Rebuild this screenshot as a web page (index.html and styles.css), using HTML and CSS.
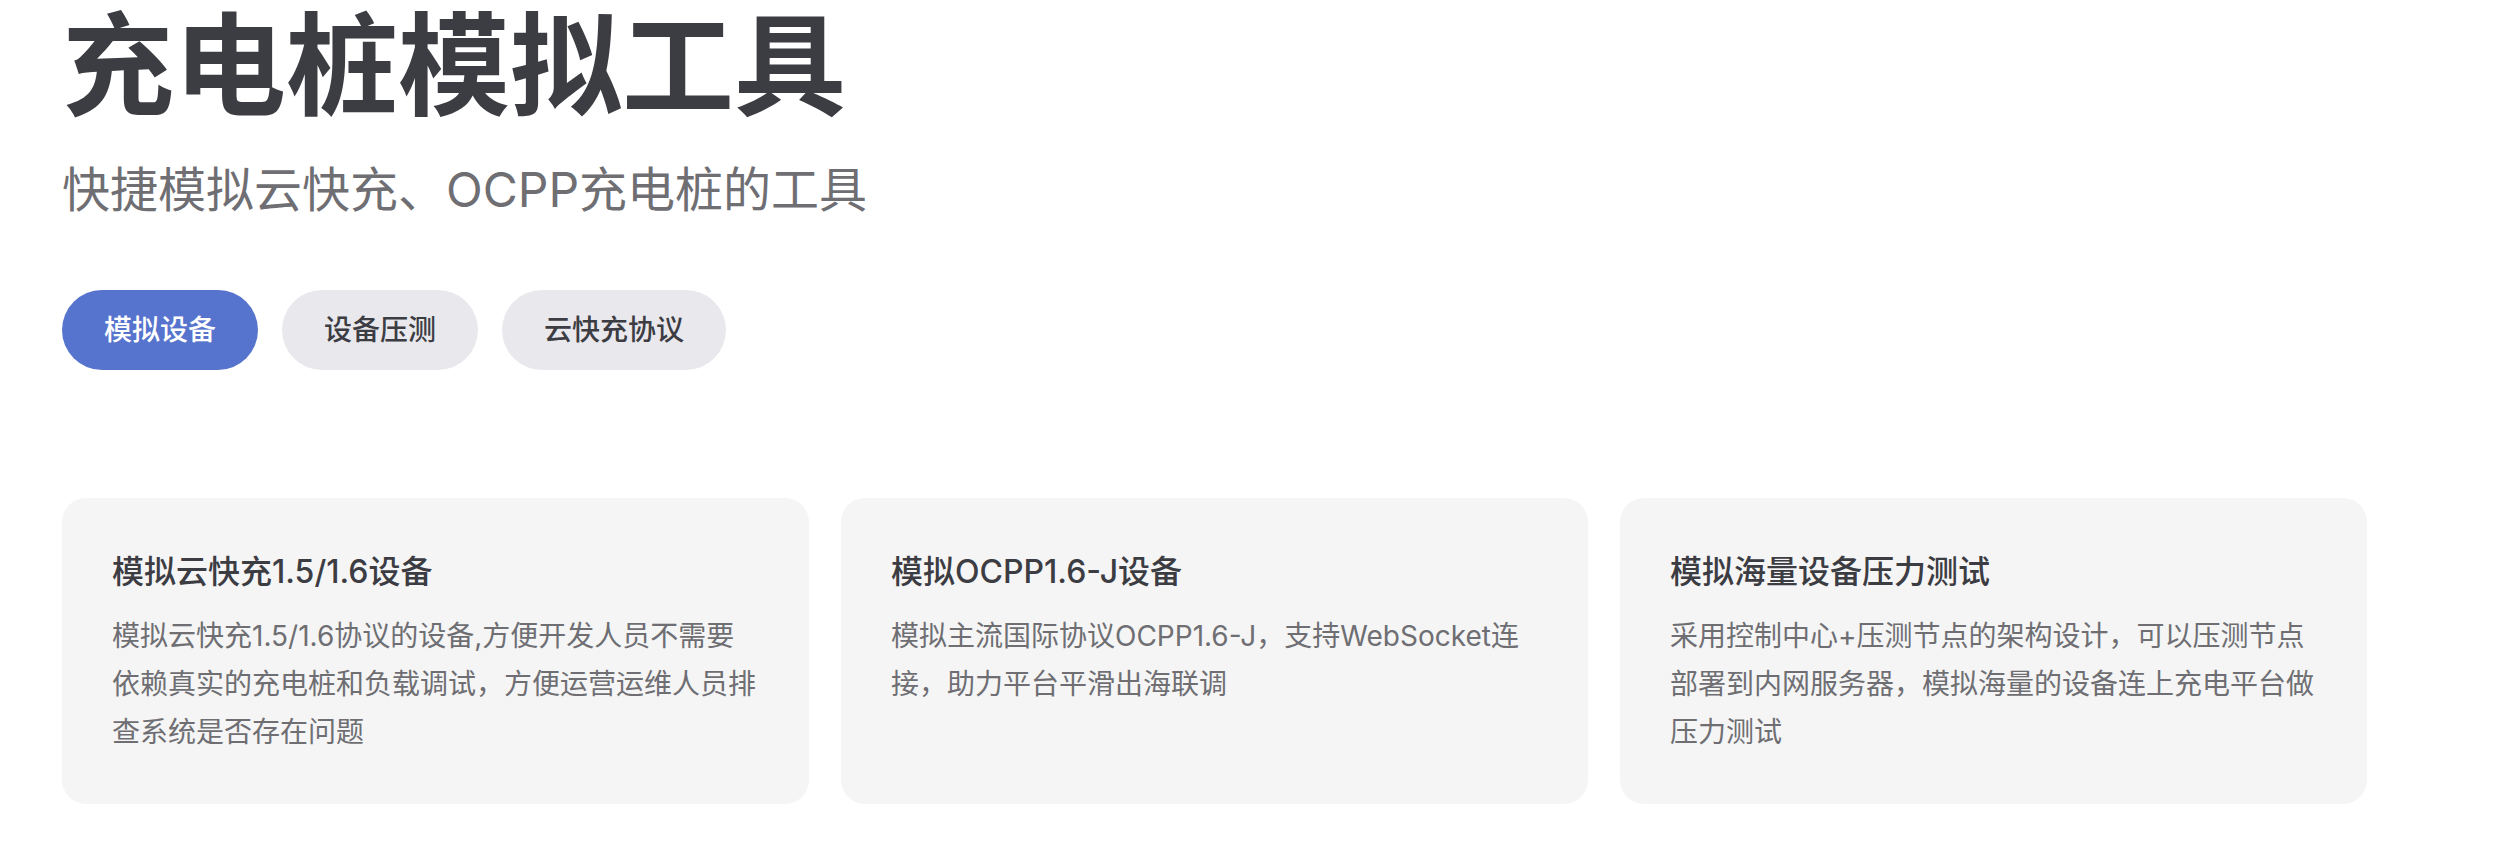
FILE: index.html
```html
<!DOCTYPE html>
<html lang="zh-CN">
<head>
<meta charset="utf-8">
<title>充电桩模拟工具</title>
<link rel="stylesheet" href="styles.css">
</head>
<body>
<main class="page">
  <header class="hero">
    <h1 class="hero-title">充电桩模拟工具</h1>
    <p class="hero-sub">快捷模拟云快充、OCPP充电桩的工具</p>
  </header>
  <nav class="tabs">
    <button class="tab tab-active">模拟设备</button>
    <button class="tab">设备压测</button>
    <button class="tab">云快充协议</button>
  </nav>
  <section class="cards">
    <article class="card">
      <h2 class="card-title">模拟云快充1.5/1.6设备</h2>
      <p class="card-desc">模拟云快充1.5/1.6协议的设备,方便开发人员不需要依赖真实的充电桩和负载调试，方便运营运维人员排查系统是否存在问题</p>
    </article>
    <article class="card">
      <h2 class="card-title">模拟OCPP1.6-J设备</h2>
      <p class="card-desc">模拟主流国际协议OCPP1.6-J，支持WebSocket连接，助力平台平滑出海联调</p>
    </article>
    <article class="card">
      <h2 class="card-title">模拟海量设备压力测试</h2>
      <p class="card-desc">采用控制中心+压测节点的架构设计，可以压测节点部署到内网服务器，模拟海量的设备连上充电平台做压力测试</p>
    </article>
  </section>
</main>
</body>
</html>
```
FILE: styles.css
```css
* {
  box-sizing: border-box;
}

html, body {
  margin: 0;
  padding: 0;
  background: #ffffff;
}

body {
  font-family: Inter, "Noto Sans CJK SC", "Noto Sans", sans-serif;
  color: #3c3c43;
}

.page {
  padding: 0 0 0 62px;
  width: 2367px;
}

.hero {
  display: flex;
  flex-direction: column;
}

.hero-title {
  margin: 0;
  font-size: 112px;
  line-height: 132px;
  font-weight: 600;
  color: #3c3c43;
  letter-spacing: 0;
}

.hero-sub {
  margin: 22px 0 0;
  font-size: 48px;
  line-height: 72px;
  font-weight: 400;
  color: #6e6e73;
}

.tabs {
  display: flex;
  gap: 24px;
  margin-top: 64px;
}

.tab {
  height: 80px;
  padding: 0 42px;
  border: none;
  border-radius: 40px;
  background: #e9e8ed;
  color: #3c3c43;
  font-family: Inter, "Noto Sans CJK SC", sans-serif;
  font-size: 28px;
  font-weight: 500;
  line-height: 80px;
  cursor: pointer;
}

.tab-active {
  background: #5673cd;
  color: #ffffff;
}

.cards {
  display: grid;
  grid-template-columns: repeat(3, 1fr);
  gap: 32px;
  margin-top: 128px;
}

.card {
  background: #f5f5f5;
  border-radius: 24px;
  padding: 48px 52px 48px 50px;
}

.card-title {
  margin: 0;
  font-size: 32px;
  line-height: 52px;
  font-weight: 500;
  color: #3c3c43;
}

.card-desc {
  margin: 14px 0 0;
  font-size: 28px;
  line-height: 48px;
  color: #6e6e73;
}
```
